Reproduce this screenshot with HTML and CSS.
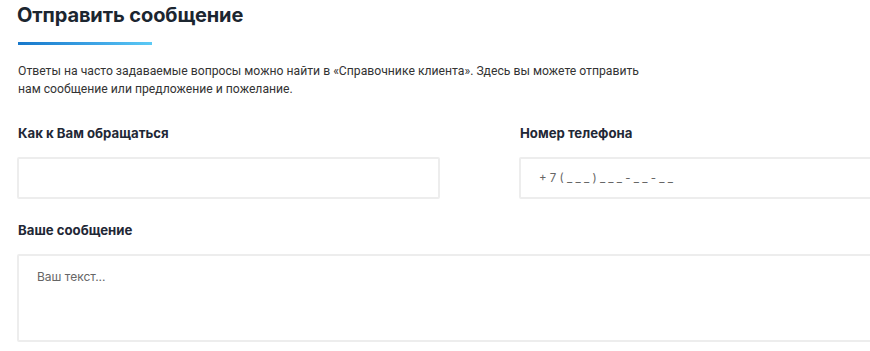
FILE: index.html
```html
<!DOCTYPE html>
<html lang="ru">
<head>
    <meta charset="UTF-8">
    <title>Отправить сообщение</title>
    <link rel="stylesheet" href="styles.css">
</head>
<body>
<div class="feedback">
    <h1 class="feedback-title">Отправить сообщение</h1>
    <div class="feedback-line"></div>
    <p class="feedback-text">
        Ответы на часто задаваемые вопросы можно найти в «Справочнике клиента». Здесь вы можете отправить<br>
        нам сообщение или предложение и пожелание.
    </p>

    <form class="feedback-form">
        <div class="field">
            <label class="field-label" for="name">Как к Вам обращаться</label>
            <input class="field-input" type="text" id="name">
        </div>
        <div class="field">
            <label class="field-label" for="phone">Номер телефона</label>
            <input class="field-input" type="text" id="phone" placeholder="+ 7 ( _ _ _ ) _ _ _ - _ _ - _ _">
        </div>
        <div class="field field-wide">
            <label class="field-label" for="message">Ваше сообщение</label>
            <textarea class="field-input field-area" id="message" placeholder="Ваш текст..."></textarea>
        </div>
    </form>
</div>
</body>
</html>
```

FILE: styles.css
```css
* {
    margin: 0;
    padding: 0;
    box-sizing: border-box;
}

html, body {
    overflow: hidden;
    background-color: #fff;
}

body {
    font-family: Roboto, "Noto Sans", sans-serif;
    color: #2b2f36;
}

.feedback {
    width: 960px;
    padding: 1px 0 0 17px;
}

.feedback-title {
    margin-top: 1px;
    font-family: Inter, "Noto Sans", sans-serif;
    font-size: 20px;
    line-height: 26px;
    font-weight: 700;
    color: #1c2630;
    letter-spacing: -0.1px;
}

.feedback-line {
    width: 134px;
    height: 3px;
    margin: 14px 0 0 1px;
    background: linear-gradient(to right, #1778cb, #3fa6e6 60%, #5ccaf5);
}

.feedback-text {
    margin: 17px 0 0 1px;
    font-size: 12.2px;
    line-height: 18px;
    color: #333;
}

.feedback-form {
    display: grid;
    grid-template-columns: 423px 423px;
    column-gap: 79px;
    row-gap: 21px;
    margin-top: 25px;
}

.field-wide {
    grid-column: 1 / 3;
}

.field-label {
    display: block;
    margin-left: 1px;
    font-family: Inter, "Noto Sans", sans-serif;
    font-size: 13.2px;
    line-height: 20px;
    font-weight: 700;
    color: #1f2836;
}

.field-input {
    display: block;
    width: 100%;
    height: 42px;
    margin-top: 14px;
    padding: 0 18px;
    border: 2px solid #ededed;
    border-radius: 2px;
    background: #fff;
    font-family: Inter, "Noto Sans", sans-serif;
    font-size: 11.5px;
    color: #333;
    outline: none;
}

.field-input::placeholder {
    color: #666;
}

.field-area {
    height: 88px;
    padding: 13px 18px;
    font-size: 12px;
    resize: none;
}
```
